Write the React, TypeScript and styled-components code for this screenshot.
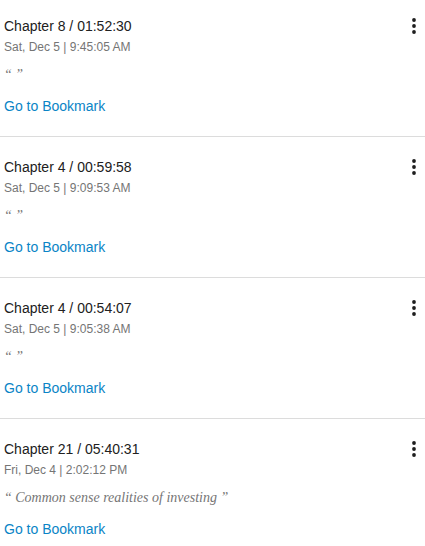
import React from "react";
import styled, { createGlobalStyle } from "styled-components";

const Global = createGlobalStyle`
  html, body { margin: 0; padding: 0; background: #fff; }
  body { font-family: "Liberation Sans", Arial, sans-serif; overflow: hidden; }
`;

const List = styled.div`
  display: flex;
  flex-direction: column;
  margin-top: -4px;
`;

const Item = styled.div`
  display: flex;
  align-items: flex-start;
  padding: 20px 0 20px 4px;
  border-bottom: 1px solid #dcdcdc;
`;

const Body = styled.div`
  flex: 1;
  display: flex;
  flex-direction: column;
  min-width: 0;
`;

const Title = styled.div`
  font-size: 14px;
  line-height: 20px;
  color: #212121;
`;

const DateLine = styled.div`
  margin-top: 3px;
  font-size: 12px;
  line-height: 16px;
  color: #757575;
`;

const Quote = styled.div`
  margin-top: 10px;
  font-family: "Liberation Serif", "Times New Roman", serif;
  font-style: italic;
  font-size: 14px;
  line-height: 20px;
  color: #757575;
  white-space: pre;
`;

const Link = styled.a`
  margin-top: 11px;
  font-size: 14px;
  line-height: 20px;
  color: #0a84c6;
  text-decoration: none;
  align-self: flex-start;
  cursor: pointer;
`;

const MenuButton = styled.button`
  margin-top: -2px;
  margin-right: -1px;
  width: 24px;
  height: 24px;
  padding: 0;
  border: none;
  background: transparent;
  display: flex;
  align-items: center;
  justify-content: center;
  color: #1e1e1e;
  cursor: pointer;
`;

const MoreVert = () => (
  <svg width="24" height="24" viewBox="0 0 24 24" fill="currentColor">
    <circle cx="12" cy="6" r="1.9" />
    <circle cx="12" cy="12" r="1.9" />
    <circle cx="12" cy="18" r="1.9" />
  </svg>
);

const bookmarks = [
  { title: "Chapter 8 / 01:52:30", date: "Sat, Dec 5 | 9:45:05 AM", note: "" },
  { title: "Chapter 4 / 00:59:58", date: "Sat, Dec 5 | 9:09:53 AM", note: "" },
  { title: "Chapter 4 / 00:54:07", date: "Sat, Dec 5 | 9:05:38 AM", note: "" },
  { title: "Chapter 21 / 05:40:31", date: "Fri, Dec 4 | 2:02:12 PM", note: "Common sense realities of investing" },
];

export default function App() {
  return (
    <>
      <Global />
      <List>
        {bookmarks.map((b, i) => (
          <Item key={i}>
            <Body>
              <Title>{b.title}</Title>
              <DateLine>{b.date}</DateLine>
              <Quote>{`\u201C ${b.note}${b.note ? " " : ""}\u201D`}</Quote>
              <Link>Go to Bookmark</Link>
            </Body>
            <MenuButton aria-label="More">
              <MoreVert />
            </MenuButton>
          </Item>
        ))}
      </List>
    </>
  );
}
